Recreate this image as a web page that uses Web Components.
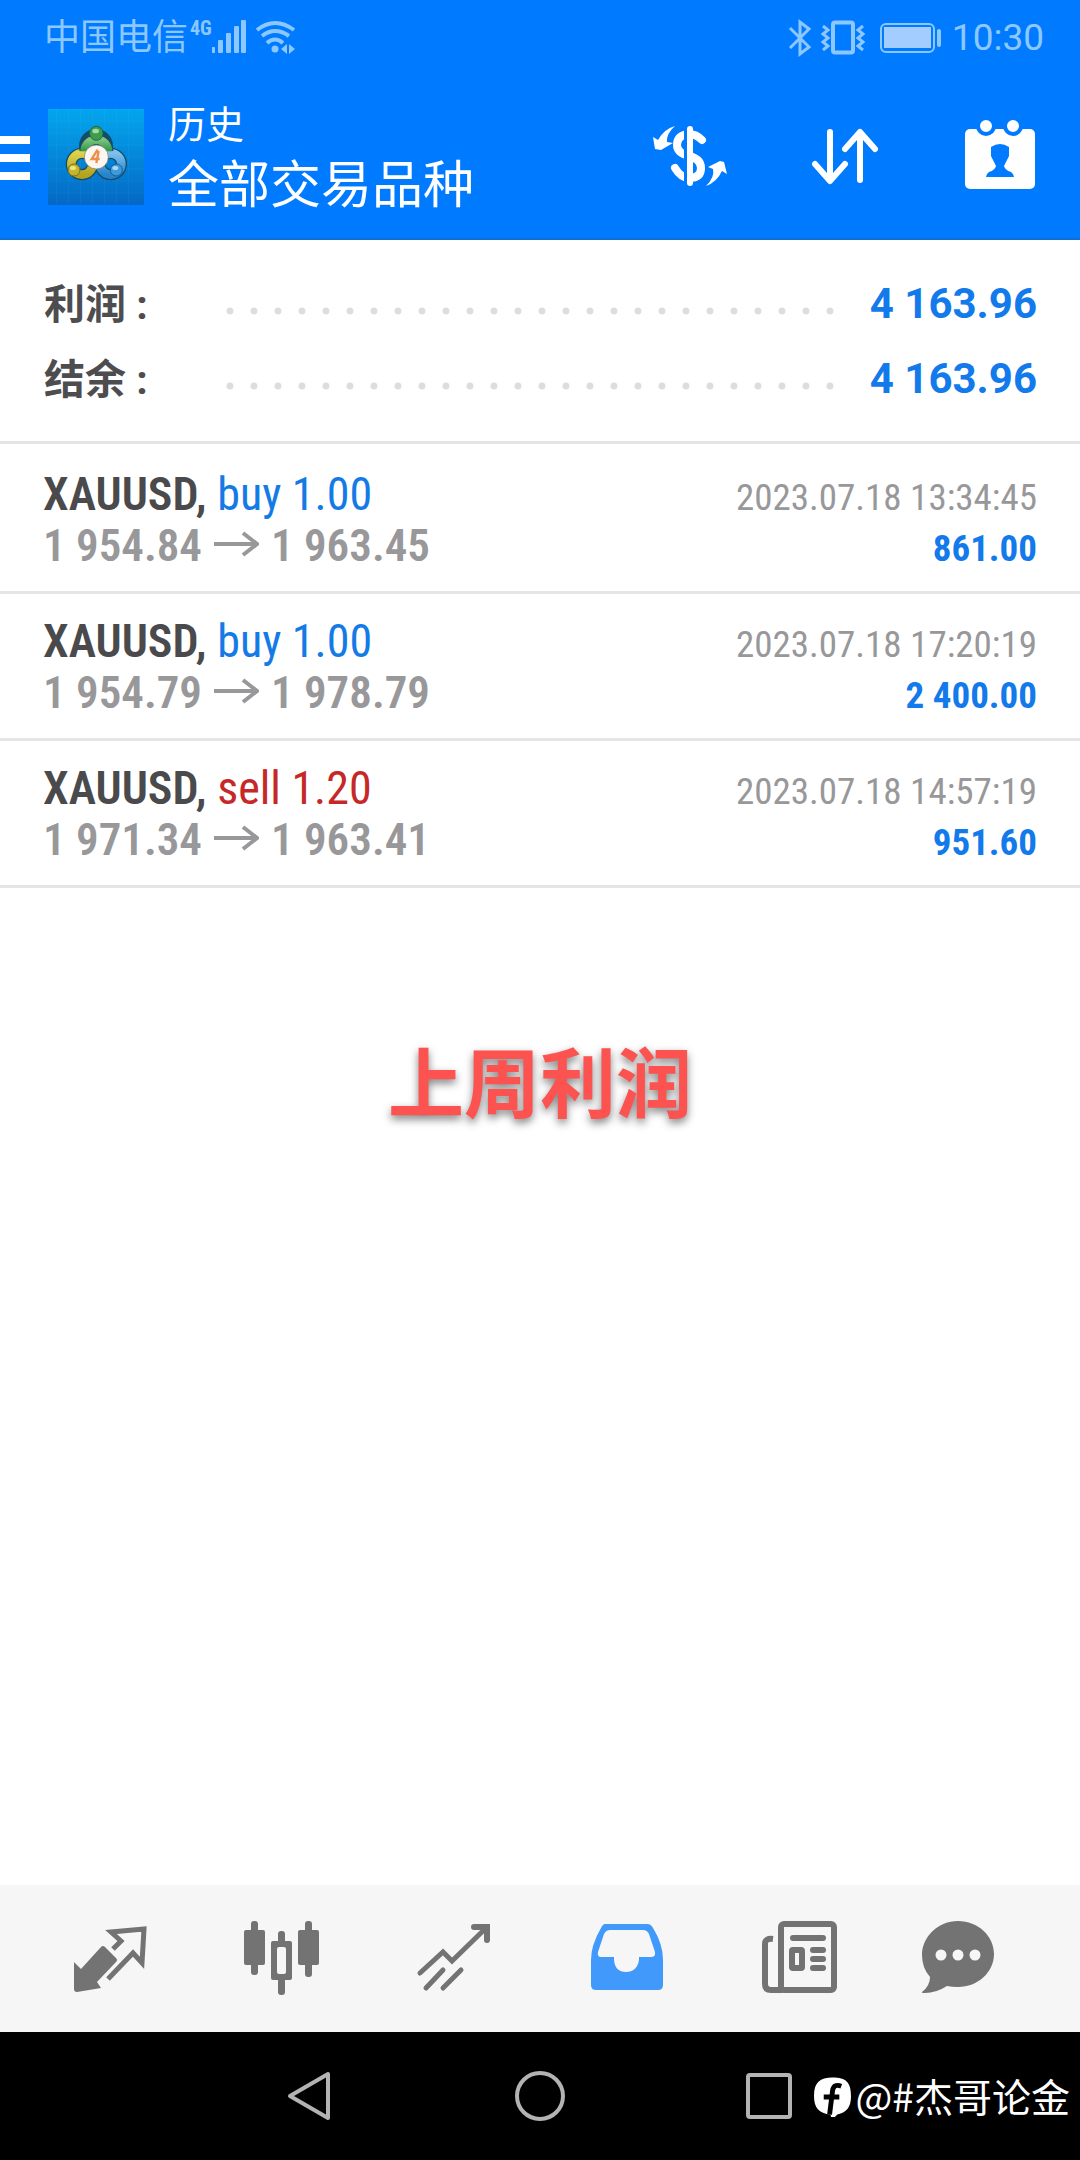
<!DOCTYPE html>
<html lang="zh-CN">
<head>
<meta charset="utf-8">
<meta name="viewport" content="width=device-width, initial-scale=1">
<title>历史</title>
<style>
  body { margin: 0; background: #fff; font-family: Roboto, "Noto Sans CJK SC", sans-serif; }
</style>
</head>
<body>
<history-screen></history-screen>

<script>
const define = (name, html, setup) => {
  const template = document.createElement('template');
  template.innerHTML = html;
  customElements.define(name, class extends HTMLElement {
    constructor() {
      super();
      this.attachShadow({ mode: 'open' }).append(template.content.cloneNode(true));
    }
    connectedCallback() { if (setup) setup(this, this.shadowRoot); }
  });
};

define('status-bar', `
<style>
  :host { display: flex; align-items: center; justify-content: space-between; height: 76px; padding: 0 36px 0 44px; color: #8cc8ff; box-sizing: border-box; }
  div { display: flex; align-items: center; }
  .carrier { font-size: 36px; line-height: 48px; }
  .net { font: 700 20px/28px "Roboto Condensed", Roboto, sans-serif; align-self: flex-start; margin-left: 2px; }
  .time { font-size: 37px; line-height: 48px; margin-left: 8px; }
  svg { display: block; }
</style>
<div>
  <span class="carrier">中国电信</span><span class="net">4G</span>
  <svg width="86" height="48" viewBox="211 13 86 48" fill="currentColor" aria-hidden="true">
    <rect x="210" y="46" width="4" height="6" rx="1"/><rect x="217" y="39" width="5" height="13" rx="1"/><rect x="225" y="32" width="5" height="20" rx="1"/><rect x="233" y="25" width="5" height="27" rx="1"/><rect x="240" y="19" width="5" height="33" rx="1"/>
    <g fill="none" stroke="currentColor" stroke-width="4"><path d="M256 29q18-14 37 0"/><path d="M261 35q13-10 27 0"/><path d="M266 42q8-7 16 0"/></g>
    <circle cx="274" cy="48" r="3.500"/><path d="M286 43v10l-6-5zM288 43v10l6-5z"/>
  </svg>
</div>
<div>
  <svg width="156" height="48" viewBox="792 13 156 48" fill="none" stroke="currentColor" stroke-width="3" aria-hidden="true">
    <path d="M794 27l19 19-9 7V21l9 7-19 19" stroke-width="3"/>
    <rect x="837" y="21.500" width="20" height="30" rx="2" stroke-width="4"/>
    <path d="M827 25l5 4-5 4 5 4-5 4 5 4-5 4M867 25l-5 4 5 4-5 4 5 4-5 4 5 4"/>
    <rect x="885" y="23" width="53" height="28" rx="5" stroke-width="2"/>
    <rect x="888" y="26" width="47" height="21" fill="#a3ccff" stroke="none"/>
    <rect x="941" y="28" width="4" height="18" rx="2" fill="currentColor" stroke="none"/>
  </svg>
  <time class="time">10:30</time>
</div>
`);

define('icon-button', `
<style>
  :host { display: block; }
  button { display: block; width: 100%; margin: 0; padding: 0; border: 0; background: none; color: inherit; }
  ::slotted(svg) { display: block; margin: 0 auto; }
</style>
<button type="button"><slot></slot></button>
`, (host, root) => root.querySelector('button').setAttribute('aria-label', host.getAttribute('label') || ''));

define('app-header', `
<style>
  :host { display: flex; align-items: center; height: 164px; box-sizing: border-box; padding-right: 32px; background: #007aff; color: #fff; border-bottom: 2px solid #0f6fd6; }
  .logo { display: block; margin: 0 24px 0 18px; }
  .titles { flex: 1; display: flex; flex-direction: column; padding-top: 4px; }
  h1, p { margin: 0; font-weight: 400; }
  h1 { font-size: 38px; line-height: 54px; }
  p { font-size: 51px; line-height: 68px; }
  nav { display: flex; gap: 60px; }
</style>
<icon-button label="菜单"><svg width="30" height="96" viewBox="0 110 30 96" fill="#fff"><path d="M0 137h30v8H0zM0 155h30v8H0zM0 173h30v8H0z"/></svg></icon-button>
<svg class="logo" width="96" height="96" viewBox="24 24 288 288" role="img" aria-label="MetaTrader 4">
  <defs>
    <linearGradient id="bg" x1="0" y1="0" x2="0" y2="1"><stop offset="0" stop-color="#03a6ee"/><stop offset="1" stop-color="#0468c4"/></linearGradient>
    <linearGradient id="g" x1="0" y1="0" x2="0" y2="1"><stop offset="0" stop-color="#7cc47e"/><stop offset="1" stop-color="#2c9448"/></linearGradient>
    <linearGradient id="y" x1="0" y1="0" x2="0" y2="1"><stop offset="0" stop-color="#ddd24c"/><stop offset="1" stop-color="#b3a31f"/></linearGradient>
    <linearGradient id="b" x1="0" y1="0" x2="0" y2="1"><stop offset="0" stop-color="#7fc0ee"/><stop offset="1" stop-color="#2683cc"/></linearGradient>
  </defs>
  <rect x="24" y="24" width="288" height="288" fill="url(#bg)"/>
  <path d="M50 24v288M86 24v288M122 24v288M158 24v288M194 24v288M230 24v288M266 24v288M24 60h288M24 96h288M24 132h288M24 168h288M24 204h288M24 240h288M24 276h288" stroke="#fff" stroke-opacity=".07" stroke-width="2"/>
  <g fill="none">
    <g stroke="#154d68" stroke-width="34"><circle cx="126" cy="189" r="32"/><circle cx="212" cy="189" r="32"/><circle cx="168" cy="135" r="34"/></g>
    <circle cx="212" cy="189" r="32" stroke="url(#b)" stroke-width="26"/>
    <circle cx="126" cy="189" r="32" stroke="url(#y)" stroke-width="26"/>
    <path d="M134 150a35 35 0 1 1 70 0" stroke="#154d68" stroke-width="32"/>
    <path d="M134 151a35 35 0 1 1 70 0" stroke="url(#g)" stroke-width="26"/>
  </g>
  <ellipse cx="169" cy="97" rx="20" ry="21" fill="#3c9d50" stroke="#1f6841" stroke-width="3"/><ellipse cx="167" cy="90" rx="10" ry="7" fill="#a4d9a0"/>
  <circle cx="102" cy="207" r="18" fill="#c5b527" stroke="#6f732d" stroke-width="3"/><ellipse cx="99" cy="201" rx="9" ry="6" fill="#eee686"/>
  <circle cx="229" cy="207" r="18" fill="#3f9ada" stroke="#175d9a" stroke-width="3"/><ellipse cx="226" cy="201" rx="9" ry="6" fill="#a9d8f5"/>
  <circle cx="169" cy="168" r="36" fill="#fbf6f0" stroke="#70705b" stroke-width="2"/>
  <path d="M173 146l-18 28h24M176 150l-7 36" fill="none" stroke="#ec8e4e" stroke-width="7"/>
</svg>
<div class="titles"><h1>历史</h1><p>全部交易品种</p></div>
<nav>
  <icon-button label="货币"><svg width="96" height="96" viewBox="640 109 96 96">
    <path d="M702 140q-6-6-13-6-12 1-12 11 0 8 12 11 12 3 12 12 0 10-12 10-8 0-14-10" fill="none" stroke="#fff" stroke-width="8" stroke-linecap="round"/>
    <path d="M685.500 127v58" stroke="#007aff" stroke-width="3"/>
    <path d="M690 129v54" stroke="#fff" stroke-width="6" stroke-linecap="round"/>
    <path d="M675 126q-9 8-8 16l6 1-12 7-6-1-2-12 5 3q6-11 17-14zM706 186q9-9 7-17l-5-2 12-6 4 1 3 12-5-3q-5 11-16 15z" fill="#fff"/>
  </svg></icon-button>
  <icon-button label="排序"><svg width="96" height="96" viewBox="797 109 96 96" fill="none" stroke="#fff" stroke-width="6" stroke-linecap="round" stroke-linejoin="round"><path d="M831 132v48M816 164l15 17 15-17M861 180v-48M846 149l15-17 15 17"/></svg></icon-button>
  <icon-button label="日期"><svg width="96" height="96" viewBox="953 109 96 96">
    <rect x="966" y="129" width="70" height="60" rx="5" fill="#fff"/>
    <g fill="#fff" stroke="#007aff" stroke-width="4"><circle cx="987" cy="126" r="8"/><circle cx="1014" cy="126" r="8"/></g>
    <path d="M992 147q9-6 18 0v9l-3 6-2 4q1 4 7 6 3 2 3 5h-28q0-3 3-5 6-2 7-6l-2-4-3-6z" fill="#007aff"/>
  </svg></icon-button>
</nav>
`);

define('summary-row', `
<style>
  :host { display: flex; align-items: center; height: 75px; font-size: 42px; font-weight: 700; }
  dt { width: 174px; margin: 0; padding-bottom: 5px; color: #4d4d50; font-size: 41px; }
  i { flex: 1; height: 23px; background: radial-gradient(circle at 12px 4px, #dddddf 3px, transparent 4px) 0 100% / 24px 8px repeat-x; }
  dd { min-width: 195px; margin: 0; text-align: right; color: #127aeb; }
</style>
<dt><slot name="label"></slot></dt><i></i><dd><slot></slot></dd>
`);

define('deal-row', `
<style>
  :host { display: block; padding: 22px 43px 20px; border-bottom: 3px solid #e5e5e5; font-family: "Roboto Condensed", Roboto, sans-serif; font-size: 46px; line-height: 51px; }
  div { display: flex; align-items: baseline; justify-content: space-between; height: 51px; }
  .symbol { font-weight: 600; color: #4a4a4d; }
  .side { color: #147ae6; }
  :host([side="sell"]) .side { color: #c62828; }
  .prices { font-size: 45px; font-weight: 600; color: #98989a; }
  .prices svg { margin: 0 12px; vertical-align: 4px; }
  time { font-size: 37px; color: #98989a; }
  .profit { font-size: 37px; font-weight: 700; color: #127aeb; }
</style>
<div><span><span class="symbol"></span> <span class="side"></span></span><time></time></div>
<div><span class="prices"><span class="open"></span><svg width="45" height="26" viewBox="0 0 45 26" fill="none" stroke="currentColor" stroke-width="4" role="img" aria-label="至"><path d="M0 13h43M29 2l14 11-14 11"/></svg><span class="close"></span></span><span class="profit"></span></div>
`, (host, root) => {
  const put = (sel, text) => { root.querySelector(sel).textContent = text; };
  put('.symbol', host.getAttribute('symbol') + ',');
  put('.side', host.getAttribute('side') + ' ' + host.getAttribute('volume'));
  put('time', host.getAttribute('time'));
  put('.open', host.getAttribute('open'));
  put('.close', host.getAttribute('close'));
  put('.profit', host.getAttribute('profit'));
});

define('tab-bar', `
<style>
  :host { display: flex; align-items: center; height: 147px; padding: 0 24px; background: #f6f6f6; color: #737373; box-sizing: border-box; }
  icon-button { flex: 1; }
  .active { color: #4099fb; }
</style>
<icon-button label="行情"><svg width="100" height="100" viewBox="60 1909 100 100">
  <path d="M74 1962l7 7 20-22q2-2 4 0l11 11q2 2 0 4l-19 20 4 6-24 4q-3 0-3-3z" fill="currentColor"/>
  <path d="M113 1949l8-8-10-9 33-3-2 34-9-10-25 26" fill="none" stroke="currentColor" stroke-width="5"/>
</svg></icon-button>
<icon-button label="图表"><svg width="100" height="100" viewBox="232 1909 100 100" fill="currentColor">
  <rect x="251" y="1921" width="7" height="54" rx="3"/><rect x="244" y="1930" width="21" height="35" rx="2"/>
  <rect x="305" y="1921" width="7" height="56" rx="3"/><rect x="298" y="1930" width="21" height="35" rx="2"/>
  <rect x="278" y="1931" width="7" height="64" rx="3"/><rect x="271" y="1941" width="21" height="39" rx="2"/>
  <rect x="277" y="1947" width="9" height="27" rx="2" fill="#f6f6f6"/>
</svg></icon-button>
<icon-button label="交易"><svg width="100" height="100" viewBox="404 1909 100 100" fill="none" stroke="currentColor" stroke-width="5" stroke-linecap="round">
  <path d="M420 1973l23-21 9 9 35-34M443 1970l-17 18M461 1970l-18 18"/><path d="M474 1927h13v13" stroke-width="6"/>
</svg></icon-button>
<icon-button class="active" label="历史"><svg width="100" height="100" viewBox="576 1909 100 100">
  <path fill="currentColor" fill-rule="evenodd" d="M605 1924h42q4 0 6 4 10 16 10 32v25q0 5-5 5h-62q-5 0-5-5v-25q0-15 10-32 2-4 4-4zM610 1930q-4 0-6 4l-6 18q-1 5 3 5h13v3q1 12 12 12t13-12v-3h12q5 0 4-5l-6-18q-2-4-6-4z"/>
</svg></icon-button>
<icon-button label="新闻"><svg width="100" height="100" viewBox="748 1909 100 100" fill="none" stroke="currentColor" stroke-width="6">
  <rect x="781" y="1924" width="53" height="66" rx="3"/><path d="M773 1939q-8-1-8 5v40q0 6 6 6h12"/>
  <path d="M793 1938h30M813 1950h10M813 1959h10M813 1968h10" stroke-linecap="round"/><rect x="792" y="1950" width="10" height="18" rx="1" stroke-width="6"/>
</svg></icon-button>
<icon-button label="聊天"><svg width="100" height="100" viewBox="920 1909 100 100">
  <path d="M922 1992q8-6 8-15-8-9-8-22c0-18 16-34 36-34s36 15 36 33-16 33-36 33q-6 0-11-1-11 7-22 7-4 0-3-1z" fill="currentColor"/>
  <g fill="#f6f6f6"><circle cx="941" cy="1955" r="5.500"/><circle cx="958" cy="1955" r="5.500"/><circle cx="975" cy="1955" r="5.500"/></g>
</svg></icon-button>
`);

define('system-nav', `
<style>
  :host { position: relative; display: flex; justify-content: center; align-items: center; gap: 130px; height: 128px; background: #000; color: #b3b3b3; }
  icon-button { width: 100px; }
  .author { position: absolute; right: 10px; top: 0; bottom: 3px; display: flex; align-items: center; gap: 4px; color: #fff; font-size: 39px; font-family: "Noto Sans CJK SC", sans-serif; }
</style>
<icon-button label="返回"><svg width="100" height="60" viewBox="260 2066 100 60" fill="none" stroke="currentColor" stroke-width="4" stroke-linejoin="round"><path d="M328 2074v44l-38-22z"/></svg></icon-button>
<icon-button label="主页"><svg width="100" height="60" viewBox="490 2066 100 60" fill="none" stroke="currentColor" stroke-width="4"><circle cx="540" cy="2096" r="23"/></svg></icon-button>
<icon-button label="最近任务"><svg width="100" height="60" viewBox="720 2066 100 60" fill="none" stroke="currentColor" stroke-width="4"><rect x="748" y="2075" width="42" height="42" rx="2"/></svg></icon-button>
<div class="author"><svg width="37" height="44" viewBox="0 -4 38 44" aria-hidden="true">
  <path fill="#fff" d="M19 0c14 0 19 5 19 19 0 11-4 17-14 19l-6 6-1-6C5 37 0 31 0 19 0 5 6 0 19 0z"/>
  <path d="M28 9q-8-3-9 5l-3 24M10 20h16" fill="none" stroke="#000" stroke-width="5"/>
</svg><span>@#杰哥论金</span></div>
`);

define('history-screen', `
<style>
  :host { display: flex; flex-direction: column; min-height: 100vh; }
  header { background: #007aff; }
  dl { margin: 0; padding: 26px 43px 25px 44px; border-bottom: 3px solid #e5e5e5; }
  main { flex: 1; }
  .deals { padding-top: 3px; }
  .caption { margin: 154px 0 0; text-align: center; font-size: 76px; line-height: 88px; font-weight: 700; color: #fc5351; text-shadow: 0 4px 8px rgba(0, 0, 0, .5); }
</style>
<header><status-bar></status-bar><app-header></app-header></header>
<main>
  <dl>
    <summary-row><span slot="label">利润 :</span>4 163.96</summary-row>
    <summary-row><span slot="label">结余 :</span>4 163.96</summary-row>
  </dl>
  <section class="deals">
    <deal-row symbol="XAUUSD" side="buy" volume="1.00" time="2023.07.18 13:34:45" open="1 954.84" close="1 963.45" profit="861.00"></deal-row>
    <deal-row symbol="XAUUSD" side="buy" volume="1.00" time="2023.07.18 17:20:19" open="1 954.79" close="1 978.79" profit="2 400.00"></deal-row>
    <deal-row symbol="XAUUSD" side="sell" volume="1.20" time="2023.07.18 14:57:19" open="1 971.34" close="1 963.41" profit="951.60"></deal-row>
  </section>
  <p class="caption">上周利润</p>
</main>
<tab-bar></tab-bar>
<system-nav></system-nav>
`);
</script>
</body>
</html>
